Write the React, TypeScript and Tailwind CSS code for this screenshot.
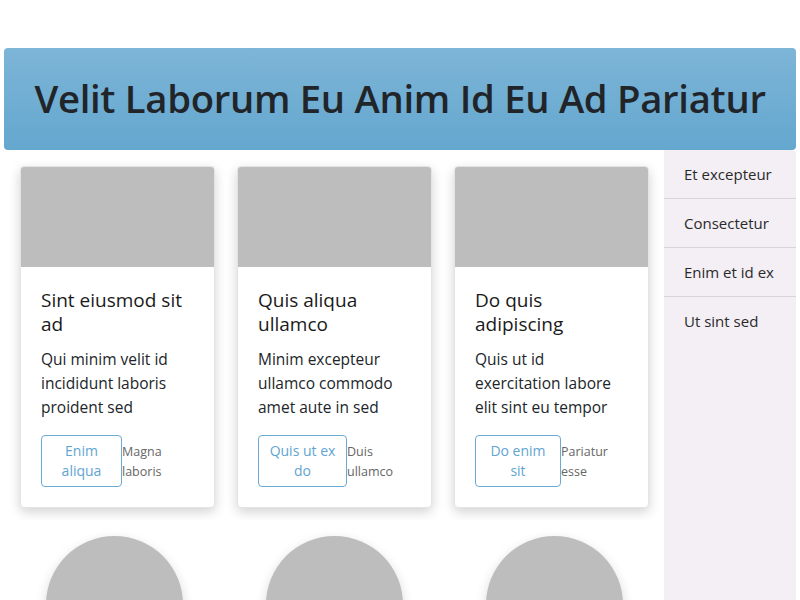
import React from "react";

const cards = [
  {
    title: "Sint eiusmod sit ad",
    text: "Qui minim velit id incididunt laboris proident sed",
    button: "Enim aliqua",
    note: "Magna laboris",
    btnWidth: "w-[81px]",
  },
  {
    title: "Quis aliqua ullamco",
    text: "Minim excepteur ullamco commodo amet aute in sed",
    button: "Quis ut ex do",
    note: "Duis ullamco",
    btnWidth: "w-[89px]",
  },
  {
    title: "Do quis adipiscing",
    text: "Quis ut id exercitation labore elit sint eu tempor",
    button: "Do enim sit",
    note: "Pariatur esse",
    btnWidth: "w-[86px]",
  },
];

const links = ["Et excepteur", "Consectetur", "Enim et id ex", "Ut sint sed"];

type CardProps = {
  title: string;
  text: string;
  button: string;
  note: string;
  btnWidth: string;
};

const Card = ({ title, text, button, note, btnWidth }: CardProps) => {
  return (
    <div className="w-[195px] shrink-0 bg-white rounded-[4px] border border-[#e4e4e4] shadow-[0_4px_12px_rgba(0,0,0,0.18)] overflow-hidden">
      <div className="h-[100px] bg-[#bdbdbd]" />
      <div className="px-5 pt-[21px] pb-5">
        <h3 className="text-[19px] leading-6 font-medium text-[#1a1a1a]">{title}</h3>
        <p className="mt-[11px] text-[15.5px] leading-6 text-[#212529]">{text}</p>
        <div className="mt-[16px] flex items-start">
          <button
            className={`${btnWidth} h-[52px] shrink-0 border border-[#6aaad4] rounded-[4px] text-[14px] leading-[20px] text-[#5fa5d1] px-2`}
          >
            {button}
          </button>
          <span className="mt-[7px] text-[12.5px] leading-[20px] text-[#666]">{note}</span>
        </div>
      </div>
    </div>
  );
};

const App = () => {
  return (
    <div className="w-[800px] h-[600px] overflow-hidden bg-white px-1 pt-12 font-['Open_Sans',sans-serif] text-[#212529]">
      <header className="h-[102px] rounded-[4px] bg-gradient-to-b from-[#7db5d7] to-[#64a7cf] flex items-center justify-center">
        <h1 className="text-[38.25px] font-semibold tracking-[-0.3px] text-[#212529]">
          Velit Laborum Eu Anim Id Eu Ad Pariatur
        </h1>
      </header>

      <div className="flex">
        <main className="w-[660px] shrink-0">
          <div className="h-[370px] overflow-hidden pl-4 pt-[16px] flex items-start gap-[22px]">
            {cards.map((card, i) => (
              <Card key={i} {...card} />
            ))}
          </div>
          <div className="grid grid-cols-3 pt-4">
            {cards.map((_, i) => (
              <div key={i} className="flex justify-center">
                <div className="w-[137px] h-[137px] rounded-full bg-[#bdbdbd] shadow-[0_4px_12px_rgba(0,0,0,0.15)]" />
              </div>
            ))}
          </div>
        </main>

        <aside className="flex-1 bg-[#f3eff5] rounded-tr-[4px] h-[450px]">
          {links.map((link, i) => (
            <div
              key={i}
              className="h-[49px] pl-5 flex items-center border-b border-[#d9d4dc] last:border-b-0 text-[15px] text-[#2a2a2a]"
            >
              {link}
            </div>
          ))}
        </aside>
      </div>
    </div>
  );
};

export default App;
